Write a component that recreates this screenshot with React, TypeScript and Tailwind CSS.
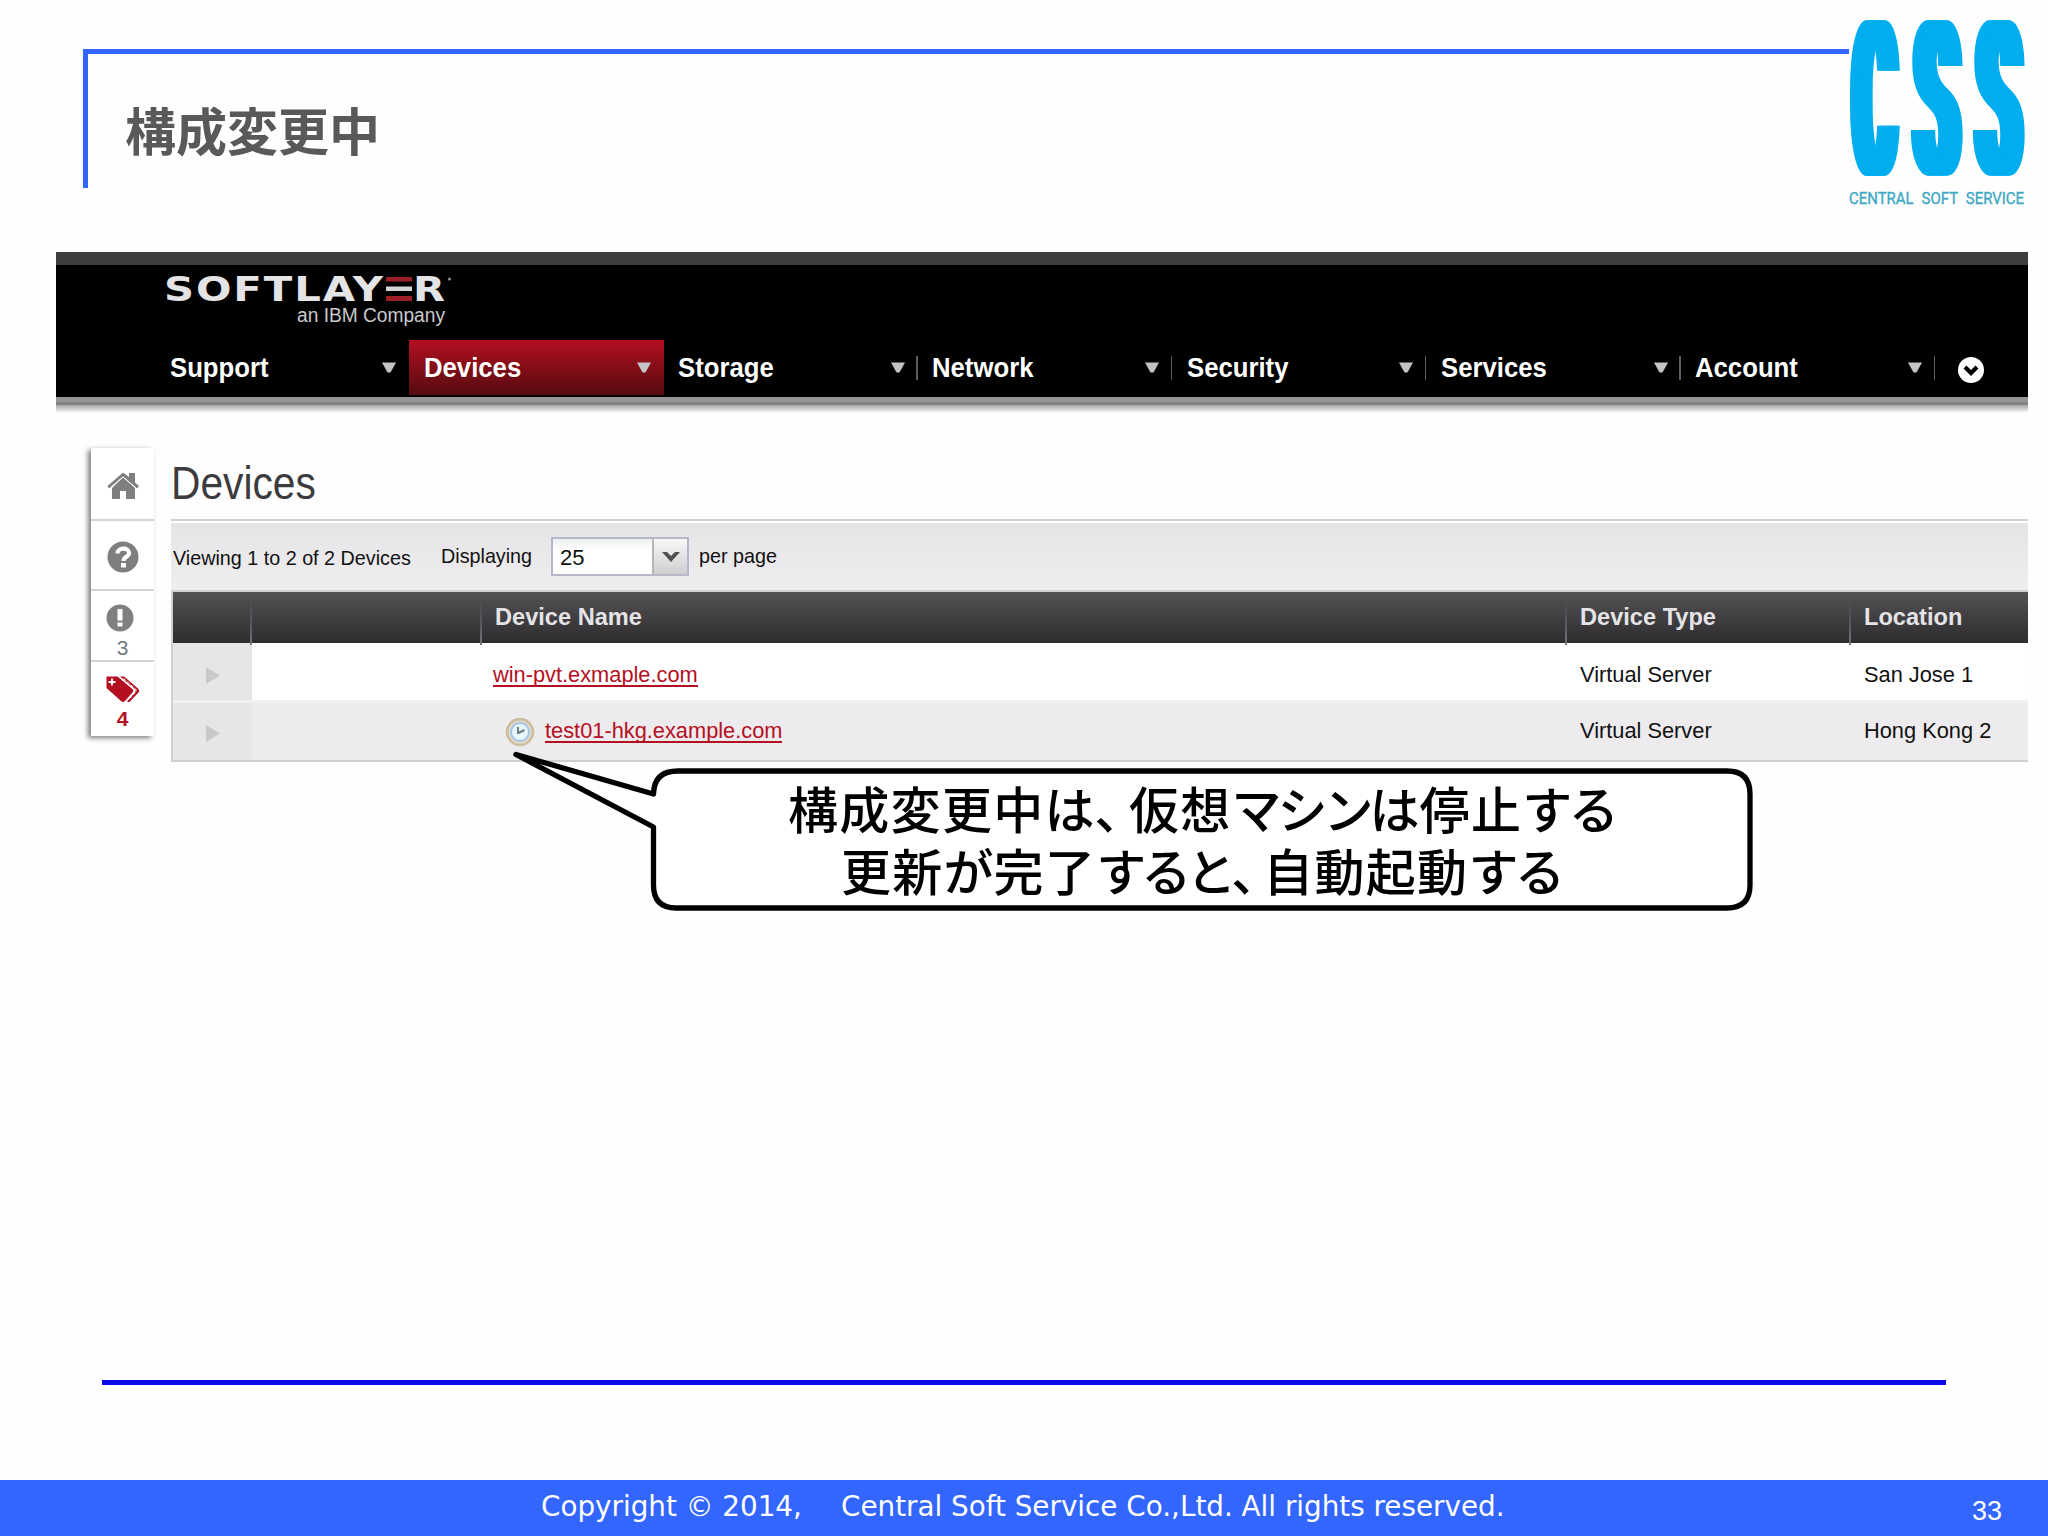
import { ReactNode } from 'react';
import clsx from 'clsx';

const navItems = [
  { label: 'Support', active: false, divider: false },
  { label: 'Devices', active: true, divider: false },
  { label: 'Storage', active: false, divider: true },
  { label: 'Network', active: false, divider: true },
  { label: 'Security', active: false, divider: true },
  { label: 'Services', active: false, divider: true },
  { label: 'Account', active: false, divider: true },
];

const devices = [
  { name: 'win-pvt.exmaple.com', type: 'Virtual Server', location: 'San Jose 1', pending: false },
  { name: 'test01-hkg.example.com', type: 'Virtual Server', location: 'Hong Kong 2', pending: true },
];

const columns = 'grid grid-cols-[79px_230px_1085px_284px_177px]';

function CompanyLogo() {
  const letter =
    'inline-block leading-none text-[100px] [text-shadow:-14px_0_0_#00aeef,-9px_0_0_#00aeef,-4px_0_0_#00aeef,4px_0_0_#00aeef,9px_0_0_#00aeef,14px_0_0_#00aeef]';
  return (
    <div className="w-[175px] text-[#00aeef]">
      <div className="flex h-[160px] justify-between font-['Roboto',sans-serif]">
        <div className="flex w-[51px] items-center justify-center pt-[5px]">
          <span className={clsx(letter, 'scale-x-[0.6] scale-y-[2.14]')}>C</span>
        </div>
        <div className="flex w-[51px] items-center justify-center pt-[5px]">
          <span className={clsx(letter, 'scale-x-[0.65] scale-y-[2.14]')}>S</span>
        </div>
        <div className="flex w-[51px] items-center justify-center pt-[5px]">
          <span className={clsx(letter, 'scale-x-[0.65] scale-y-[2.14]')}>S</span>
        </div>
      </div>
      <svg className="mt-3 block" width="175" height="16" viewBox="0 0 175 16">
        <text
          x="0"
          y="13.5"
          fontFamily="Roboto, sans-serif"
          fontSize="17"
          wordSpacing="5"
          fill="#3fa9c4"
          stroke="#3fa9c4"
          strokeWidth="0.4"
          textLength="175"
          lengthAdjust="spacingAndGlyphs"
        >
          CENTRAL SOFT SERVICE
        </text>
      </svg>
    </div>
  );
}

function SoftLayerLogo() {
  return (
    <svg className="block" width="300" height="75" viewBox="0 0 300 75">
      <g fill="#e4e4e6" fontFamily="Liberation Sans, sans-serif">
        <text x="8" y="36" fontFamily="DejaVu Sans, sans-serif" fontSize="33" fontWeight="bold" letterSpacing="1.5" textLength="221" lengthAdjust="spacingAndGlyphs">
          SOFTLAY
        </text>
        <text x="257" y="36" fontFamily="DejaVu Sans, sans-serif" fontSize="33" fontWeight="bold" textLength="32" lengthAdjust="spacingAndGlyphs">
          R
        </text>
        <text x="141" y="57" fontSize="20" textLength="148" lengthAdjust="spacingAndGlyphs" fill="#c9c9cb">
          an IBM Company
        </text>
      </g>
      <rect x="230" y="12" width="26" height="4.5" fill="#9c1f26" />
      <rect x="230" y="21.5" width="26" height="4.5" fill="#d4d4d6" />
      <rect x="230" y="31" width="26" height="5" fill="#9c1f26" />
      <circle cx="293.5" cy="14" r="1.6" fill="#8a8a8c" />
    </svg>
  );
}

function TopNav() {
  return (
    <div className="flex h-[55px] pl-[99px]">
      {navItems.map((item) => (
        <div
          key={item.label}
          className={clsx(
            'flex w-[254.3px] items-center justify-between pl-[14.5px]',
            item.active && 'bg-gradient-to-b from-[#b30f20] to-[#560a10]'
          )}
        >
          <span className="inline-block origin-left scale-x-[0.935] text-[27.5px] leading-none font-bold text-white">
            {item.label}
          </span>
          <div className="flex items-center">
            <svg width="14" height="11" viewBox="0 0 14 11" className="mr-[11.5px]">
              <path d="M0 0.5h14L8.5 10.5h-3z" fill="#c4c4c6" />
            </svg>
            <div className={clsx('h-6 w-[1.5px]', item.divider && 'bg-[#5c5c5e]')} />
          </div>
        </div>
      ))}
      <div className="flex items-center pt-[4px] pl-[23px]">
        <svg width="26" height="26" viewBox="0 0 26 26">
          <circle cx="13" cy="13" r="13" fill="#fff" />
          <path d="M7 10l6 6 6-6" fill="none" stroke="#000" strokeWidth="4.2" />
        </svg>
      </div>
    </div>
  );
}

function SideTab({ className, children }: { className: string; children: ReactNode }) {
  return <div className={clsx('flex flex-col items-center', className)}>{children}</div>;
}

function Sidebar() {
  return (
    <div className="mt-[35px] h-[288px] w-[63px] shrink-0 bg-white shadow-[-3px_2px_5px_rgba(0,0,0,0.5)]">
      <SideTab className="h-[73px] border-b-2 border-[#d3d3d6] pt-[24px]">
        <svg width="32" height="28" viewBox="0 0 32 28" fill="#7f7f82">
          <path d="M16 5L28 16v11h-9v-8h-6v8H5V16z" />
          <path d="M0.500 14L16 0.500 22 5V1h6v9.500L32 14l-2 2.500L16 4.500 2 16.500z" />
          <path d="M2.500 16.500L16 5l13.500 11.500" fill="none" stroke="#fff" strokeWidth="1" />
        </svg>
      </SideTab>
      <SideTab className="h-[70px] border-b-2 border-[#d3d3d6] pt-[20px]">
        <svg width="32" height="32" viewBox="0 0 32 32">
          <circle cx="16" cy="16" r="15.500" fill="#7f7f82" />
          <path d="M10.500 12.500c0-6.500 11.500-6.500 11.500-0.500 0 4-5.500 3.500-5.500 8" fill="none" stroke="#fff" strokeWidth="4.200" />
          <rect x="14" y="22" width="5" height="4.500" fill="#fff" />
        </svg>
      </SideTab>
      <SideTab className="h-[71px] border-b-2 border-[#d3d3d6] pt-[13px]">
        <svg width="28" height="28" viewBox="0 0 28 28" className="mr-[5px]">
          <circle cx="14" cy="14" r="13.500" fill="#7f7f82" />
          <rect x="11.500" y="5" width="5" height="11.500" fill="#fff" />
          <rect x="11.500" y="18.500" width="5" height="4" fill="#fff" />
        </svg>
        <span className="mt-[5px] text-[21px] leading-none text-[#77777a]">3</span>
      </SideTab>
      <SideTab className="h-[74px] pt-[13px]">
        <svg width="34" height="28" viewBox="0 0 34 28" fill="#b50f22">
          <path d="M0.500 1.500h11L27 14.500Q28 16 26.500 17.500L19 26q-2 2-4 0L0.500 13z" />
          <path d="M14 1.500h4l14.500 12.500q1.500 2 0 3.500L24 26.500q-1.500 1-3 0l8-9q1.500-2 0-3.500z" />
          <path d="M6 3.500v7M2.500 7h7" stroke="#fff" strokeWidth="1.800" />
          <path d="M17.500 3.500l12 10.500q1.500 1.500 0 3l-7 8" fill="none" stroke="#fff" strokeWidth="1" strokeDasharray="3 2" />
        </svg>
        <span className="mt-[5px] text-[21px] leading-none font-bold text-[#b50f22]">4</span>
      </SideTab>
    </div>
  );
}

function Toolbar() {
  const label = 'inline-block origin-left scale-x-[0.94] whitespace-nowrap text-[21px] leading-none';
  return (
    <div className="flex h-[69px] items-center border-b-2 border-[#d0cfd2] bg-gradient-to-b from-[#e5e4e7] to-[#efedf0] pl-[2px] text-[#111]">
      <div className="w-[268px] pt-[5px]">
        <span className={label}>Viewing 1 to 2 of 2 Devices</span>
      </div>
      <div className="w-[110px] pt-[1px]">
        <span className={label}>Displaying</span>
      </div>
      <div className="flex h-[39px] w-[138px] border-2 border-[#b5b8c8] bg-white">
        <span className="w-[99px] bg-gradient-to-b from-[#eeeff0] to-white to-30% pl-[7px] text-[22px] leading-[38px]">25</span>
        <div className="flex flex-1 items-center justify-center border-l-2 border-[#b5b5b8] bg-gradient-to-b from-[#f8f8f8] to-[#cfcfd2]">
          <svg width="20" height="12" viewBox="0 0 20 12">
            <path d="M1 1h5l4 4 4-4h5l-9 10z" fill="#505053" />
          </svg>
        </div>
      </div>
      <div className="ml-[10px] pt-[1px]">
        <span className={label}>per page</span>
      </div>
    </div>
  );
}

function ClockIcon() {
  return (
    <svg width="30" height="30" viewBox="0 0 30 30" className="mr-[10px]">
      <circle cx="15" cy="15" r="14.300" fill="#cdbf9e" />
      <circle cx="15" cy="15" r="11.500" fill="#e3dccb" />
      <circle cx="15" cy="15" r="10" fill="#9fc3e6" />
      <circle cx="15" cy="15" r="8" fill="#e8f5fc" />
      <path d="M13 10v7M13.500 16l6-3" stroke="#6b7f80" strokeWidth="2" fill="none" />
    </svg>
  );
}

function DeviceTable() {
  return (
    <div className="border-b-2 border-l-2 border-[#d0cfd2]">
      <div className={clsx(columns, 'h-[51px] items-center bg-gradient-to-b from-[#545255] to-[#2e2c2f] text-[23.6px] font-bold text-[#e4e4e6]')}>
        {['', '', 'Device Name', 'Device Type', 'Location'].map((title, i) => (
          <div key={i} className="relative flex h-full items-center pl-[13px]">
            {i > 0 && <div className="absolute top-2 -left-[2px] h-[45px] w-[1.5px] bg-gradient-to-b from-transparent to-[#77757a]" />}
            {title}
          </div>
        ))}
      </div>
      {devices.map((device) => (
        <div
          key={device.name}
          className={clsx(columns, 'text-[21.8px] text-[#111]', device.pending ? 'h-[57px] bg-[#edebee]' : 'h-[60px] border-b-[3px] border-[#f1f0f2] bg-white')}
        >
          <div className={clsx('flex items-center bg-[#e6e5e8] pl-[33px]', device.pending ? 'pt-[3px]' : 'pt-[8px]')}>
            <svg width="14" height="17" viewBox="0 0 14 17">
              <path d="M0 0l14 8.500L0 17z" fill="#c9c8cb" />
            </svg>
          </div>
          <div />
          <div className={clsx('flex items-center', device.pending ? 'pl-[23px]' : 'pt-[8px] pl-[11px]')}>
            {device.pending && <ClockIcon />}
            <a className="border-b-[2.5px] border-[#b50f22] leading-[20px] text-[#b50f22]">{device.name}</a>
          </div>
          <div className={clsx('flex items-center pl-[13px]', !device.pending && 'pt-[8px]')}>{device.type}</div>
          <div className={clsx('flex items-center pl-[13px]', !device.pending && 'pt-[8px]')}>{device.location}</div>
        </div>
      ))}
    </div>
  );
}

function Callout() {
  return (
    <div className="absolute top-[740px] left-[500px] h-[180px] w-[1260px]">
      <svg className="absolute inset-0" width="1260" height="180" viewBox="0 0 1260 180">
        <path
          d="M153.500 54Q154 31 178 31H1227Q1250 31 1250 54V145Q1250 168 1227 168H176Q153.500 168 153.500 145V87L16 14.500Z"
          fill="#fff"
          stroke="#000"
          strokeWidth="5.300"
          strokeLinejoin="round"
        />
      </svg>
      <div className="relative pt-[36px] font-['Noto_Sans_CJK_JP',sans-serif] text-[50px] leading-[62px] font-medium whitespace-nowrap text-black">
        <div className="pl-[288px]">
          <span className="tracking-[1.3px]">構成変更中</span>
          <span>は</span>
          <span className="tracking-[-15.5px]">、</span>
          <span className="tracking-[1.3px]">仮想</span>
          <span className="tracking-[-4px]">マシン</span>
          <span>は</span>
          <span className="tracking-[1.3px]">停止</span>
          <span className="tracking-[-3.5px]">する</span>
        </div>
        <div className="pl-[341px]">
          <span className="tracking-[1.3px]">更新</span>
          <span>が</span>
          <span className="tracking-[1.3px]">完了</span>
          <span className="tracking-[-5px]">すると</span>
          <span className="tracking-[-18px]">、</span>
          <span className="tracking-[1.3px]">自動起動</span>
          <span className="tracking-[-3.5px]">する</span>
        </div>
      </div>
    </div>
  );
}

export default function App() {
  return (
    <div className="relative flex h-[1536px] w-[2048px] flex-col overflow-hidden bg-[#fefefe]">
      <header className="flex h-[252px] shrink-0 pt-[18px] pl-[83px]">
        <div className="mt-[31px] h-[139px] w-[1766px] border-t-[5px] border-l-[5px] border-[#3366ff] pt-[37px] pl-[37px]">
          <h1 className="font-['Noto_Sans_CJK_JP',sans-serif] text-[51px] leading-[76px] font-bold text-[#595959]">構成変更中</h1>
        </div>
        <CompanyLogo />
      </header>

      <main className="ml-[56px] w-[1972px] font-['Liberation_Sans',sans-serif]">
        <div className="h-[145px] border-t-[13px] border-[#3e3d40] bg-black">
          <div className="h-[75px] pl-[100px]">
            <SoftLayerLogo />
          </div>
          <TopNav />
        </div>
        <div className="h-[5px] bg-[#969598]" />
        <div className="h-[3px] bg-[#828184]" />
        <div className="h-[8px] bg-gradient-to-b from-[#a5a4a7] to-[#fefefe]" />

        <div className="flex pl-[35px]">
          <Sidebar />
          <div className="ml-[17px] flex-1">
            <div className="h-[108px] border-b-2 border-[#d0cfd2] pt-[46px]">
              <h2 className="inline-block origin-left scale-x-[0.885] text-[46px] leading-[48px] text-[#3c3b3e]">Devices</h2>
            </div>
            <div className="mt-[2px]">
              <Toolbar />
              <DeviceTable />
            </div>
          </div>
        </div>
      </main>

      <Callout />

      <div className="mt-auto">
        <div className="mb-[95px] ml-[102px] h-[5px] w-[1844px] bg-[#0a0ae8]" />
        <footer className="flex h-[56px] bg-[#3366ff] pl-[541px] text-white">
          <p className="flex pt-[11px] font-['DejaVu_Sans',sans-serif] text-[27.8px] leading-[32px] whitespace-nowrap">
            <span className="w-[300px]">Copyright © 2014,</span>
            <span>Central Soft Service Co.,Ltd. All rights reserved.</span>
          </p>
          <span className="mr-[46px] ml-auto pt-[15px] font-['Liberation_Sans',sans-serif] text-[27px] leading-[32px]">33</span>
        </footer>
      </div>
    </div>
  );
}
